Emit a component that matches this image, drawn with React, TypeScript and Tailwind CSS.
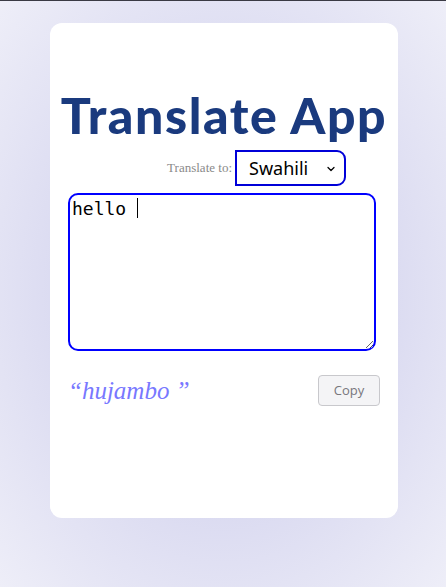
import { ChevronDown } from "lucide-react"

export default function App() {
  return (
    <div className="min-h-[587px] border-t border-[#3a3a44] bg-[radial-gradient(ellipse_at_center,#d2d2ee_0%,#d8d8f0_45%,#eeeef8_100%)] pt-[22px]">
      <div className="ml-[50px] flex h-[495px] w-[348px] flex-col rounded-xl bg-white pt-[67px]">
        <h1 className="text-center font-['Lato',sans-serif] text-[50px] leading-none font-black tracking-[1.6px] whitespace-nowrap text-[#1a3a7e]">
          Translate App
        </h1>

        <div className="mt-[10px] mr-[52px] flex items-center justify-end gap-[3px]">
          <label className="font-['Liberation_Serif',serif] text-[13px] text-[#8a8a8a]">
            Translate to:
          </label>
          <div className="relative">
            <select
              defaultValue="sw"
              className="h-[36px] w-[111px] appearance-none rounded-r-[9px] border-2 border-[#0000d8] bg-white pl-[12px] font-['Noto_Sans',sans-serif] text-[18px] text-black outline-none"
            >
              <option value="sw">Swahili</option>
              <option value="fr">French</option>
              <option value="es">Spanish</option>
            </select>
            <ChevronDown className="pointer-events-none absolute top-[13px] right-[9px] h-[12px] w-[12px] text-black" strokeWidth={2.5} />
          </div>
        </div>

        <div className="relative mt-[7px] ml-[18px] w-[308px]">
          <textarea
            defaultValue="hello "
            className="block h-[158px] w-full rounded-[10px] border-2 border-[#0000ff] px-[2px] py-[3px] font-['DejaVu_Sans_Mono',monospace] text-[18px] leading-[22px] text-black outline-none"
          />
          <span className="pointer-events-none absolute top-[5px] left-[69px] h-[20px] w-px bg-black" />
        </div>

        <div className="mt-[21px] ml-[18px] flex w-[312px] items-center justify-between">
          <p className="font-['Liberation_Serif',serif] text-[25px] italic text-[#7878ff]">
            “hujambo ”
          </p>
          <button className="h-[31px] w-[62px] rounded-[4px] border border-[#c8c8cc] bg-[#f4f4f6] font-['Open_Sans',sans-serif] text-[13px] text-[#77777c]">
            Copy
          </button>
        </div>
      </div>
    </div>
  )
}
